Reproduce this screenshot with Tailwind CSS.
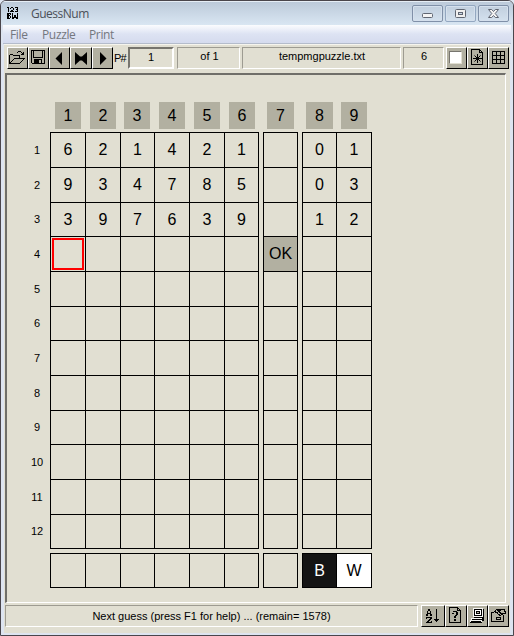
<!DOCTYPE html>
<html lang="en">
<head>
<meta charset="utf-8">
<title>GuessNum</title>
<script src="https://cdn.jsdelivr.net/npm/@tailwindcss/browser@4"></script>
</head>
<body class="bg-[#dfe6f2] font-['Liberation_Sans',Arial,sans-serif] text-black overflow-hidden">
<div class="w-[514px] h-[636px] border border-[#4a464c] rounded-t-[6px] bg-[#dde4f0] flex flex-col overflow-hidden">
  <!-- title bar -->
  <header class="h-[24px] shrink-0 bg-linear-to-b from-[#bccada] to-[#d9e6f2] border-t border-[#e6eef6] flex items-start pl-[6px]">
    <svg class="mt-[5px]" width="12" height="12" shape-rendering="crispEdges" data-bitmap="##..##..###./.#.#..#...#./.#....#..##./.#..##....#./.#.####.###./............/####.#....#./##.#.#....#./###..#.##.#./##.#.#.##.#./##.#.######./###..##..##"></svg>
    <span class="ml-[12px] mt-[4px] text-[12px] leading-[16px] tracking-[-0.5px] text-[#4b5058] font-['Open_Sans',sans-serif] w-[60px] whitespace-nowrap">GuessNum</span>
    <div class="ml-auto mr-[4px] mt-[3px] flex gap-[2px]">
      <div class="w-[31px] h-[17px] rounded-[2px] border border-[#8090a8] shadow-[inset_0_0_0_1px_#d5e0ed] flex items-center justify-center"><svg width="13" height="13"><rect x="1.500" y="6.500" width="10" height="4" rx="1" fill="#f4f4f4" stroke="#606672"/></svg></div>
      <div class="w-[31px] h-[17px] rounded-[2px] border border-[#93a7c0] shadow-[inset_0_0_0_1px_#d5e0ed] flex items-center justify-center"><svg width="13" height="11"><rect x="1.500" y="1.500" width="10" height="8" rx="1" fill="#efefef" stroke="#606672"/><rect x="4.500" y="4.500" width="4" height="2" fill="#cbd8e7" stroke="#606672"/></svg></div>
      <div class="w-[31px] h-[17px] rounded-[2px] border border-[#8090a8] shadow-[inset_0_0_0_1px_#d5e0ed] flex items-center justify-center"><svg width="13" height="11"><path d="M1.500 1.500h3.200l1.800 2 1.800-2h3.200l-3.300 4 3.300 4H8.300l-1.800-2-1.800 2H1.500l3.300-4z" fill="#f4f4f4" stroke="#606672"/></svg></div>
    </div>
  </header>
  <!-- menu bar -->
  <nav class="h-[19px] shrink-0 ml-[2px] mr-[2px] bg-linear-to-b from-[#fbfcfe] via-[#dde3f3] to-[#d5dbee] border-b border-[#b4bccb] flex pl-[7px] text-[12px] leading-[20px] tracking-[-0.35px] text-[#74777e] font-['Open_Sans',sans-serif]">
    <span class="w-[32px]">File</span><span class="w-[47px]">Puzzle</span><span>Print</span>
  </nav>
  <main class="flex-1 mx-[3px] mb-[2px] bg-[#e1dfd2] border-t border-[#f5f4ee] flex flex-col">
    <!-- toolbar -->
    <div class="flex pl-[3px] pt-[2px] h-[28px] shrink-0 text-[11px]">
      <div class="w-[21px] h-[22px] bg-[#b2b0a1] border border-t-white border-l-white border-r-black border-b-black pl-px pt-[3px]"><svg width="16" height="14" shape-rendering="crispEdges" data-bitmap=".........###..../........#...#.#./.............##./.###........###./#...#######...../#.........#...../#.........#...../#....###########/#...#.........#./#..#.........#../#.#.........#.../##.........#..../###########....."></svg></div>
      <div class="w-[21px] h-[22px] bg-[#b2b0a1] border border-t-white border-l-white border-r-black border-b-black"><svg width="19" height="20" shape-rendering="crispEdges" fill="none" stroke="#000"><path d="M2.500 2.500h13v13h-12l-1-1zM4.500 2v7.500h9V2"/><path d="M5 11h8v5H5z" fill="#000" stroke="none"/><path d="M10 12h2v3h-2z" fill="#b2b0a1" stroke="none"/></svg></div>
      <div class="w-[21px] h-[22px] bg-[#b2b0a1] border border-t-white border-l-white border-r-black border-b-black"><svg width="19" height="20"><path d="M12 4v13L5.500 10.500z"/></svg></div>
      <div class="w-[22px] h-[22px] bg-[#b2b0a1] border border-t-white border-l-white border-r-black border-b-black"><svg width="20" height="20"><path d="M4 4l5 4.500h2L16 4v13l-5-4.500H9L4 17z"/></svg></div>
      <div class="w-[21px] h-[22px] bg-[#b2b0a1] border border-t-white border-l-white border-r-black border-b-black"><svg width="19" height="20"><path d="M7 4v13l6.500-6.500z"/></svg></div>
      <span class="w-[15px] pl-px leading-[23px] tracking-[-0.8px]">P#</span>
      <div class="w-[46px] h-[22px] border-2 border-t-[#77756e] border-l-[#77756e] border-r-white border-b-white text-center leading-[17px]">1</div>
      <div class="ml-[3px] w-[63px] h-[22px] border border-t-[#9d9b91] border-l-[#9d9b91] border-r-white border-b-white text-center leading-[17px] pl-[2px]">of 1</div>
      <div class="ml-[2px] w-[159px] h-[22px] border border-t-[#9d9b91] border-l-[#9d9b91] border-r-white border-b-white text-center leading-[17px] pl-px">tempmgpuzzle.txt</div>
      <div class="ml-[2px] w-[41px] h-[22px] border border-t-[#9d9b91] border-l-[#9d9b91] border-r-white border-b-white text-center leading-[17px] pl-px">6</div>
      <div class="ml-[2px] w-[21px] h-[22px] bg-[#b2b0a1] border border-t-white border-l-white border-r-black border-b-black pl-[2px] pt-[3px]"><div class="w-[13px] h-[13px] bg-white border border-t-[#77756e] border-l-[#77756e] border-r-[#e1dfd2] border-b-[#e1dfd2]"></div></div>
      <div class="w-[21px] h-[22px] bg-[#b2b0a1] border border-t-white border-l-white border-r-black border-b-black"><svg width="19" height="20" shape-rendering="crispEdges" fill="none" stroke="#000"><path d="M3.500 1.500h8l3 3v12h-11zM11.500 1v3.500h3M9.500 6v9M5 10.500h9"/><path shape-rendering="auto" d="M6.500 7.500l6 6M12.500 7.500l-6 6"/></svg></div>
      <div class="w-[21px] h-[22px] bg-[#b2b0a1] border border-t-white border-l-white border-r-black border-b-black"><svg width="19" height="20" shape-rendering="crispEdges" fill="none" stroke="#000"><path d="M3.500 3.500h12v12h-12zM3 7.500h13M3 11.500h13M7.500 3v13M11.500 3v13"/></svg></div>
    </div>
    <!-- board -->
    <section class="ml-px mr-[4px] h-[530px] shrink-0 border-t-2 border-l-2 border-[#6f6e69] border-r border-b border-r-white border-b-white pl-[23px] pt-[27px]">
      <div id="heads" class="flex h-[27px] ml-[25px] text-[16px] leading-[28px]"></div>
      <div class="flex mt-[3px]">
        <div id="labels" class="w-[20px] text-[11px] text-center pt-[0.4px]"></div>
        <div id="boards" class="flex gap-[4px]"></div>
      </div>
      <div id="totals" class="flex gap-[4px] mt-[4px] ml-[20px]"></div>
    </section>
    <!-- status bar -->
    <footer class="flex pl-[1px] pt-[2px] text-[11px]">
      <div class="w-[413px] h-[22px] border border-t-[#9d9b91] border-l-[#9d9b91] border-r-white border-b-white text-center leading-[20px]">Next guess (press F1 for help) ... (remain= 1578)</div>
      <div class="ml-[3px] w-[24px] h-[22px] bg-[#b2b0a1] border border-t-white border-l-white border-r-black border-b-black pl-[4px] pt-[3px]"><svg width="15" height="16" shape-rendering="crispEdges" data-bitmap="..##......#..../..##......#..../.#..#.....#..../.#..#.....#..../.####.....#..../##..##....#..../##..##....#..../..........#..../######....#..../#...##....#..../...##...#####../..##.....###.../.##..#....#..../######........."></svg></div>
      <div class="w-[22px] h-[22px] bg-[#b2b0a1] border border-t-white border-l-white border-r-black border-b-black"><svg width="20" height="20" shape-rendering="crispEdges" fill="none" stroke="#000"><path d="M3.500 1.500h8l3 3v12h-11zM11.500 1v3.500h3"/><path d="M6 7h2v1H6zM7 5h4v1H7zM10 6h2v3h-2zM9 9h2v1H9zM8 10h2v2H8zM8 13h2v2H8z" fill="#000" stroke="none"/></svg></div>
      <div class="w-[21px] h-[22px] bg-[#b2b0a1] border border-t-white border-l-white border-r-black border-b-black"><svg width="19" height="20" shape-rendering="crispEdges"><path d="M5 2h10v9H5zM3 12h11v4H2z" fill="#f4f4f0"/><path d="M6 3h8v7H6zM15 3h1v9h-1zM6 11h9v1H6zM4 13h10v1H4zM3 15h10v1H3zM2 16h12v1H2zM14 12h2v3h-2z"/><path d="M7 4h6v5H7z" fill="#fff"/><path d="M8 5h4v3H8z" fill="#000"/><path d="M9 6h2v1H9z" fill="#b2b0a1"/></svg></div>
      <div class="w-[21px] h-[22px] bg-[#b2b0a1] border border-t-white border-l-white border-r-black border-b-black"><svg width="19" height="20" shape-rendering="crispEdges" fill="none" stroke="#000"><path d="M5 6.500H2.500v9h12v-7M7.500 11.500h4v2h-4zM9 3.500h6l1 2v2h-3M5 5.500l3-2 5 5-2 1-5-4M8 7l5-4"/></svg></div>
    </footer>
  </main>
</div>
<script>
document.querySelectorAll('[data-bitmap]').forEach(svg => {
  let d = '';
  svg.dataset.bitmap.split('/').forEach((row, y) => [...row].forEach((p, x) => { if (p === '#') d += `M${x} ${y}h1v1h-1z`; }));
  svg.innerHTML = `<path d="${d}"/>`;
});
const rowHeights = [35,35,34,35,35,34,35,35,34,35,35,34];
const panels = [
  {cols:[35,35,34,35,35,34], rows:['621421','934785','397639']},
  {cols:[34], rows:['','','']},
  {cols:[34,35], rows:['01','03','12']}
];
const line = 'border-black border-r border-b shrink-0 flex items-center justify-center text-[16px]';
const cell = (w, h, text = '', extra = '') => `<div class="${line} ${extra}" style="width:${w}px;height:${h}px">${text}</div>`;
const panel = body => `<div class="border-black border-l border-t">${body}</div>`;
document.getElementById('labels').innerHTML = rowHeights.map((h, i) =>
  `<div class="flex items-center justify-center pr-[6px]" style="height:${h}px">${i + 1}</div>`).join('');
document.getElementById('boards').innerHTML = panels.map((p, k) => panel(rowHeights.map((h, r) =>
  `<div class="flex">${p.cols.map((w, c) => {
    if (r === 3 && k === 1) return cell(w, h, 'OK', 'bg-[#b2b0a1]');
    if (r === 3 && k === 0 && c === 0) return cell(w, h, '<div class="w-[32px] h-[32px] border-2 border-[#ff0000]"></div>');
    return cell(w, h, (p.rows[r] || '')[c] || '');
  }).join('')}</div>`).join(''))).join('');
document.getElementById('totals').innerHTML = panels.map((p, k) => panel(`<div class="flex">${p.cols.map((w, c) =>
  k === 2 ? cell(w, 34, 'BW'[c], c ? 'bg-white' : 'bg-[#141414] text-white') : cell(w, 34)).join('')}</div>`)).join('');
const heads = [[26,9],[26,8],[26,9],[26,9],[26,9],[26,12],[27,12],[27,8],[26,0]];
document.getElementById('heads').innerHTML = heads.map(([w, g], i) =>
  `<div class="bg-[#b2b0a1] text-center shrink-0" style="width:${w}px;margin-right:${g}px">${i + 1}</div>`).join('');
</script>
</body>
</html>
